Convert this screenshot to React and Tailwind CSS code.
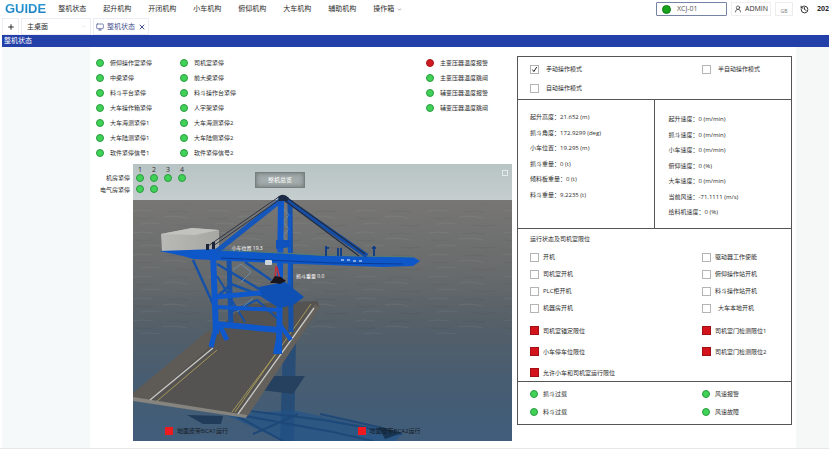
import React from 'react';
import { ChevronDown, History, Monitor, Plus, UserRound, X } from 'lucide-react';

const menus = ['整机状态', '起升机构', '开闭机构', '小车机构', '俯仰机构', '大车机构', '辅助机构'];

const stopsA = ['俯仰操作室紧停', '中梁紧停', '料斗平台紧停', '大车操作箱紧停', '大车海测紧停1', '大车陆测紧停1', '软件紧停信号1'];
const stopsB = ['司机室紧停', '前大梁紧停', '料斗操作台紧停', '人字架紧停', '大车海测紧停2', '大车陆侧紧停2', '软件紧停信号2'];
const transformer = [
  ['主变压器温度报警', 'red'],
  ['主变压器温度跳闸', 'green'],
  ['辅变压器温度报警', 'green'],
  ['辅变压器温度跳闸', 'green'],
];

const positions = [
  ['起升高度', '21.652 (m)'],
  ['抓斗角度', '172.9299 (deg)'],
  ['小车位置', '19.295 (m)'],
  ['抓斗重量', '0 (t)'],
  ['倾料板重量', '0 (t)'],
  ['料斗重量', '9.2235 (t)'],
];
const speeds = [
  ['起升速度', '0 (m/min)'],
  ['抓斗速度', '0 (m/min)'],
  ['小车速度', '0 (m/min)'],
  ['俯仰速度', '0 (%)'],
  ['大车速度', '0 (m/min)'],
  ['当前风速', '-71.1111 (m/s)'],
  ['给料机速度', '0 (%)'],
];

function Lamp({ color = 'green' }) {
  return (
    <span
      className={
        'block size-2 shrink-0 rounded-full border ' +
        (color === 'red' ? 'border-[#a81418] bg-[#cf1a20]' : 'border-[#2b9a41] bg-[#3fd257]')
      }
    />
  );
}

function LampRow({ text, color }) {
  return (
    <li className="flex h-[15px] items-center gap-1.5 whitespace-nowrap">
      <Lamp color={color} />
      {text}
    </li>
  );
}

function LampList({ items }) {
  return (
    <ul>
      {items.map((t) => (
        <LampRow key={t} text={t} />
      ))}
    </ul>
  );
}

function Tick({ text, checked = false, wide = false }) {
  return (
    <label className={'flex items-center whitespace-nowrap ' + (wide ? 'gap-[7px]' : 'gap-1')}>
      <span className="relative block size-[9px] shrink-0">
        <input
          type="checkbox"
          defaultChecked={checked}
          className="peer block size-[9px] appearance-none border border-[#b4b4b4] bg-white"
        />
        <svg viewBox="0 0 9 9" className="pointer-events-none absolute inset-0 hidden size-[9px] peer-checked:block">
          <path d="M2.4 4.6 L3.9 6.6 L6.7 2" fill="none" stroke="#222" strokeWidth="1" />
        </svg>
      </span>
      {text}
    </label>
  );
}

function Limit({ text }) {
  return (
    <li className="flex h-[21px] items-center gap-1 whitespace-nowrap">
      <span className="block size-[9px] shrink-0 border border-[#a01015] bg-[#d4141c]" />
      {text}
    </li>
  );
}

function Readings({ items }) {
  return (
    <dl className="flex flex-1 flex-col justify-between">
      {items.map(([k, v]) => (
        <div key={k} className="flex h-[10px] items-center whitespace-nowrap">
          <dt>{k}：</dt>
          <dd>{v}</dd>
        </div>
      ))}
    </dl>
  );
}

function CraneScene() {
  return (
    <svg viewBox="0 0 379 277" preserveAspectRatio="none" className="absolute inset-0 size-full" aria-hidden="true">
      <defs>
        <linearGradient id="sky" x1="0" y1="0" x2="0" y2="1">
          <stop offset="0" stopColor="#b8c4c4" />
          <stop offset="1" stopColor="#c6cecf" />
        </linearGradient>
        <linearGradient id="sea" x1="0" y1="0" x2="0" y2="1">
          <stop offset="0" stopColor="#777674" />
          <stop offset="0.3" stopColor="#686b6c" />
          <stop offset="0.5" stopColor="#566068" />
          <stop offset="0.75" stopColor="#475d71" />
          <stop offset="1" stopColor="#405d7b" />
        </linearGradient>
        <linearGradient id="house" x1="0" y1="0" x2="1" y2="0">
          <stop offset="0" stopColor="#b9b9b5" />
          <stop offset="1" stopColor="#a6a6a2" />
        </linearGradient>
        <pattern id="waves" width="74" height="22" patternUnits="userSpaceOnUse">
          <path d="M0 3 q8 -2 20 0 M30 9 q10 -2 24 1 M8 16 q8 -2 20 0" fill="none" stroke="#fff" strokeOpacity="0.05" />
          <path d="M34 4 q10 -2 22 0 M2 10 q8 2 18 0 M44 17 q10 2 22 0" fill="none" stroke="#000" strokeOpacity="0.05" />
        </pattern>
      </defs>
      <rect width="379" height="37" fill="url(#sky)" />
      <rect y="36" width="379" height="241" fill="url(#sea)" />
      <rect y="40" width="379" height="130" fill="url(#waves)" />

      {/* reflection in the water */}
      <g fill="#1d4878" stroke="#1d4878">
        <path d="M150 180 L163 178 L161 277 L147 277 Z" fillOpacity="0.75" stroke="none" />
        <path d="M138 212 L172 212 L160 230 L128 226 Z" fill="#26415f" stroke="none" />
        <path d="M93 251 L160 246 L269 270 L262 277 L150 277 Z" fill="#20548a" fillOpacity="0.6" stroke="none" />
        <path d="M108 246 L190 256 L269 270 M112 252 L200 268 L240 277 M100 250 L150 277 M165 250 L120 270 M187 250 L245 263" fill="none" strokeWidth="2" />
        <path d="M54 251 L90 252 L88 260 L70 260 Z" fill="#213c5a" stroke="none" />
        <path d="M245 262 L269 269 L252 275 Z" fill="#183653" stroke="none" />
      </g>

      {/* quay */}
      <path d="M0 232 L76 173 L112 140 L184 137 L187 143 L113 253 L0 235 Z" fill="#555351" />
      <path d="M0 229 L76 166 L82 178 L17 236 L0 234 Z" fill="#5e5b56" />
      <path d="M106 250 L182 140 L187 143 L114 253 Z" fill="#64615c" />
      <path d="M0 233 L114 251 L113 254 L0 237 Z" fill="#85847f" />
      <path d="M17 236 L80 184 M105 250 L181 144" stroke="#c8c8c4" strokeWidth="1.3" />
      <path d="M24 237 L84 186 M99 248 L142 191 M102 248 L178 140" stroke="#a3975a" strokeWidth="1" />

      {/* far legs and bracing */}
      <g fill="none" stroke="#1551a8" strokeWidth="3">
        <path d="M96 95 L98 162 M157 36 L158 168" strokeWidth="5" />
        <path d="M60 96 L80 140 M84 100 L148 138 M112 98 L138 116 M84 133 L98 120 L146 138" strokeWidth="2.5" />
        <path d="M84 112 L112 158 M98 148 L124 136 L146 156" strokeWidth="2" />
      </g>
      <path d="M100 106 L108 100 L118 108 L108 118 M104 148 L120 134 M150 44 L156 51 L150 58 L156 65 L150 72 L156 79" fill="none" stroke="#6f8ba5" strokeWidth="1" />

      {/* machinery house */}
      <path d="M28 70 L59 64 L86 66 L86 84 L62 89 L29 87 Z" fill="url(#house)" />
      <path d="M28 70 L59 64 L86 66 L62 71 Z" fill="#c2c2be" />

      {/* near legs and beams */}
      <g fill="none" stroke="#0e58cb">
        <path d="M148 35 L146 190" strokeWidth="6" />
        <path d="M80 88 L83 170" strokeWidth="6" />
        <path d="M157 50 L156 130" strokeWidth="3" />
        <path d="M82 133 L136 128" strokeWidth="5" />
        <path d="M84 143 L146 146" strokeWidth="4" />
        <path d="M82 160 L146 166" strokeWidth="6" />
        <path d="M84 160 L78 183 M86 160 L94 176" strokeWidth="5" />
        <path d="M148 160 L142 190 M148 162 L158 176" strokeWidth="4" />
      </g>
      <path d="M126 123 L152 118 L171 133 L160 141 L146 144 L130 134 Z" fill="#0f50b4" />

      {/* boom */}
      <path d="M26 87 L84 85 L190 92 L280 93 L287 97 L280 102 L250 103 L140 99 L60 95 L50 92 Z" fill="#0d57c9" />
      <path d="M84 86 L190 91 L280 93" stroke="#587b6c" strokeWidth="1" fill="none" />
      <path d="M88 94 L200 99 L270 100" stroke="#0a3b93" strokeWidth="1" fill="none" />
      <path d="M208 96 h3 m3 0 h3 m3 1 h3 m3 0 h3" stroke="#a8c4ee" strokeWidth="1.5" />
      <path d="M193 92 V82 M192 84 H196 M205 92 V84 M208 92 V84 M241 92 V82 M239 84 H243" stroke="#133f86" strokeWidth="2" />

      {/* stays */}
      <path d="M148 36 L84 87" stroke="#1556bb" strokeWidth="5" />
      <path d="M147 32 L75 82 M149 34 L80 82" stroke="#2d3442" strokeWidth="1" />
      <path d="M152 35 L234 92" stroke="#154ca4" strokeWidth="5" />
      <path d="M153 33 L232 90 M151 36 L226 92" stroke="#202c40" strokeWidth="1.2" />
      <path d="M145 33 Q150 28 156 34 L155 37 L146 37 Z" fill="#1b2a45" />
      <path d="M73 80 h3 v6 h-3 z M79 78 h3 v7 h-3 z" fill="#1a2336" />
      <path d="M143 76 L157 76 L158 83 L143 85 Z" fill="#0f52bd" />

      {/* trolley and grab */}
      <rect x="132" y="96" width="7" height="5" rx="1" fill="#cdd5dc" />
      <path d="M143 102 L142 116 M144 103 L147 116" stroke="#c2303a" strokeWidth="1.6" />
      <path d="M137 119 L142 112 L148 113 L153 117 L147 120 L142 119 Z" fill="#19151c" />
    </svg>
  );
}

export default function App() {
  return (
    <div className="overflow-hidden bg-white font-['Open_Sans','Noto_Sans_CJK_SC',sans-serif] text-[6px] leading-[10px] text-[#2c2c2c]">
      <header className="flex h-[18px] items-center justify-between overflow-hidden pl-[5px] text-[7px]">
        <div className="flex items-center gap-3">
          <span className="bg-linear-to-b from-[#2fa4dd] to-[#1673b8] bg-clip-text font-['Liberation_Sans',sans-serif] text-[13px] leading-[18px] font-bold text-transparent">
            GUIDE
          </span>
          <nav className="flex items-center gap-[17px] whitespace-nowrap">
            {menus.map((m) => (
              <a key={m} href="#">{m}</a>
            ))}
            <button type="button" className="flex items-center gap-[3px]">
              操作箱
              <ChevronDown className="size-[5px]" />
            </button>
          </nav>
        </div>
        <div className="flex items-center whitespace-nowrap">
          <button type="button" className="flex h-[14px] w-[71px] items-center gap-1.5 rounded-[1px] border border-[#7683a4] pl-[5px] text-[#555]">
            <span className="block size-[9px] rounded-full border border-[#0b7a12] bg-[#18a31f]" />
            XCJ-01
          </button>
          <button type="button" className="ml-1 flex h-[14px] items-center gap-[3px] border border-[#f0f0f2] px-[2px]">
            <UserRound className="size-2" />
            ADMIN
          </button>
          <button type="button" className="ml-1 flex h-[14px] w-[18px] items-end justify-center border border-[#ededf0] text-[5px] leading-[7px] text-[#777]">
            GB
          </button>
          <button type="button" aria-label="历史" className="ml-1 flex h-[14px] w-4 items-center justify-center">
            <History className="size-[9px]" strokeWidth={2.5} />
          </button>
          <time className="ml-1 font-bold">202</time>
        </div>
      </header>

      <div className="flex h-[17px] items-stretch gap-[2px] pl-[2px] text-[7px]">
        <button type="button" aria-label="新建" className="flex w-[17px] items-center justify-center border border-[#ececf2]">
          <Plus className="size-2" strokeWidth={3} />
        </button>
        <div className="relative w-[70px] border border-[#ececf2]">
          <select aria-label="桌面" className="block size-full appearance-none pl-[5px] outline-none">
            <option>主桌面</option>
          </select>
          <ChevronDown className="pointer-events-none absolute top-[5px] right-1 size-[5px] text-[#bbb]" />
        </div>
        <button type="button" className="flex items-center gap-[3px] border border-[#ececf2] px-[2px] text-[#444f8c]">
          <Monitor className="size-2" />
          整机状态
          <X className="size-2" strokeWidth={3} />
        </button>
      </div>

      <h1 className="ml-[2px] flex h-3 items-center bg-[#2340a8] pl-[2px] text-[7px] text-white">整机状态</h1>

      <main className="grid grid-cols-[88fr_706fr_33fr] border-b border-[#e6e8e8] pl-[2px]">
        <div className="bg-[#f6f9f9]" />
        <div className="grid grid-cols-[422fr_275fr] gap-[5px] pr-1 pb-[7px]">
          <section className="pt-2">
            <div className="grid grid-cols-[84px_246px_1fr] pl-1.5">
              <LampList items={stopsA} />
              <LampList items={stopsB} />
              <ul>
                {transformer.map(([t, c]) => (
                  <LampRow key={t} text={t} color={c} />
                ))}
              </ul>
            </div>
            <div className="mt-1 grid grid-cols-[43fr_379fr]">
              <div className="flex flex-col items-end gap-[2px] pt-[9px] pr-[3px] whitespace-nowrap">
                <span>机房紧停</span>
                <span>电气房紧停</span>
              </div>
              <div className="relative flex aspect-[379/277] flex-col justify-between">
                <CraneScene />
                <div className="relative flex items-start pr-1">
                  <div className="grid grid-cols-[14px_14px_14px_14px] justify-items-center gap-y-[3px] pt-[2px]">
                    {['1', '2', '3', '4'].map((n) => (
                      <div key={n} className="flex flex-col items-center">
                        <span className="text-[7px] leading-[8px]">{n}</span>
                        <Lamp />
                      </div>
                    ))}
                    <Lamp />
                    <Lamp />
                  </div>
                  <button type="button" className="mt-2 ml-[66px] h-4 w-[50px] border border-[#78807f] bg-[#a3abab] text-white shadow-[inset_0_0_5px_#6a7272]">
                    整机总览
                  </button>
                  <button type="button" aria-label="全屏" className="mt-[6px] ml-auto block size-[6px] border border-[#e3eaea]" />
                </div>
                <span className="absolute top-[29%] left-[26%] text-[5px] leading-[8px] text-white">小车位置 19.3</span>
                <span className="absolute top-[39%] left-[43%] text-[5px] leading-[8px] text-white">抓斗重量 0.0</span>
                <ul className="relative grid grid-cols-[192fr_154fr] pb-[5px] pl-8 text-[#161c22]">
                  {['地面皮带BCA1运行', '地面皮带BCA2运行'].map((t) => (
                    <li key={t} className="flex items-center gap-1 whitespace-nowrap">
                      <span className="block size-2 bg-[#ee1a20]" />
                      {t}
                    </li>
                  ))}
                </ul>
              </div>
            </div>
          </section>

          <section className="mt-[9px] flex flex-col divide-y divide-[#555] self-start border border-[#555]">
            <div className="grid h-[43px] grid-cols-[172fr_89fr] content-start gap-y-[9px] pt-[7px] pl-3">
              <Tick text="手动操作模式" checked wide />
              <Tick text="半自动操作模式" wide />
              <Tick text="自动操作模式" wide />
            </div>
            <div className="grid grid-cols-2 divide-x divide-[#555]">
              <div className="flex pt-3 pb-7 pl-3">
                <Readings items={positions} />
              </div>
              <div className="flex h-32 pt-[14px] pb-[11px] pl-[14px]">
                <Readings items={speeds} />
              </div>
            </div>
            <div className="h-[153px] pt-[5px] pl-3">
              <h2>运行状态及司机室限位</h2>
              <div className="mt-2 grid grid-cols-[172fr_89fr]">
                <div className="flex flex-col gap-[7px]">
                  <Tick text="开机" />
                  <Tick text="司机室开机" />
                  <Tick text="PLC柜开机" />
                  <Tick text="机器房开机" />
                </div>
                <div className="flex flex-col gap-[7px]">
                  <Tick text="驱动器工作使能" />
                  <Tick text="俯仰操作站开机" />
                  <Tick text="料斗操作站开机" />
                  <Tick text="大车本地开机" wide />
                </div>
                <ul className="mt-[7px]">
                  <Limit text="司机室锚定限位" />
                  <Limit text="小车停车位限位" />
                  <Limit text="允许小车和司机室运行限位" />
                </ul>
                <ul className="mt-[7px]">
                  <Limit text="司机室门检测限位1" />
                  <Limit text="司机室门检测限位2" />
                </ul>
              </div>
            </div>
            <ul className="grid h-[42px] grid-cols-[172fr_89fr] content-center gap-y-2 pl-3">
              {['抓斗过载', '风速报警', '料斗过载', '风速故障'].map((t) => (
                <li key={t} className="flex items-center gap-[5px] whitespace-nowrap">
                  <Lamp />
                  {t}
                </li>
              ))}
            </ul>
          </section>
        </div>
        <div className="bg-[#f6f8f8]" />
      </main>
    </div>
  );
}
